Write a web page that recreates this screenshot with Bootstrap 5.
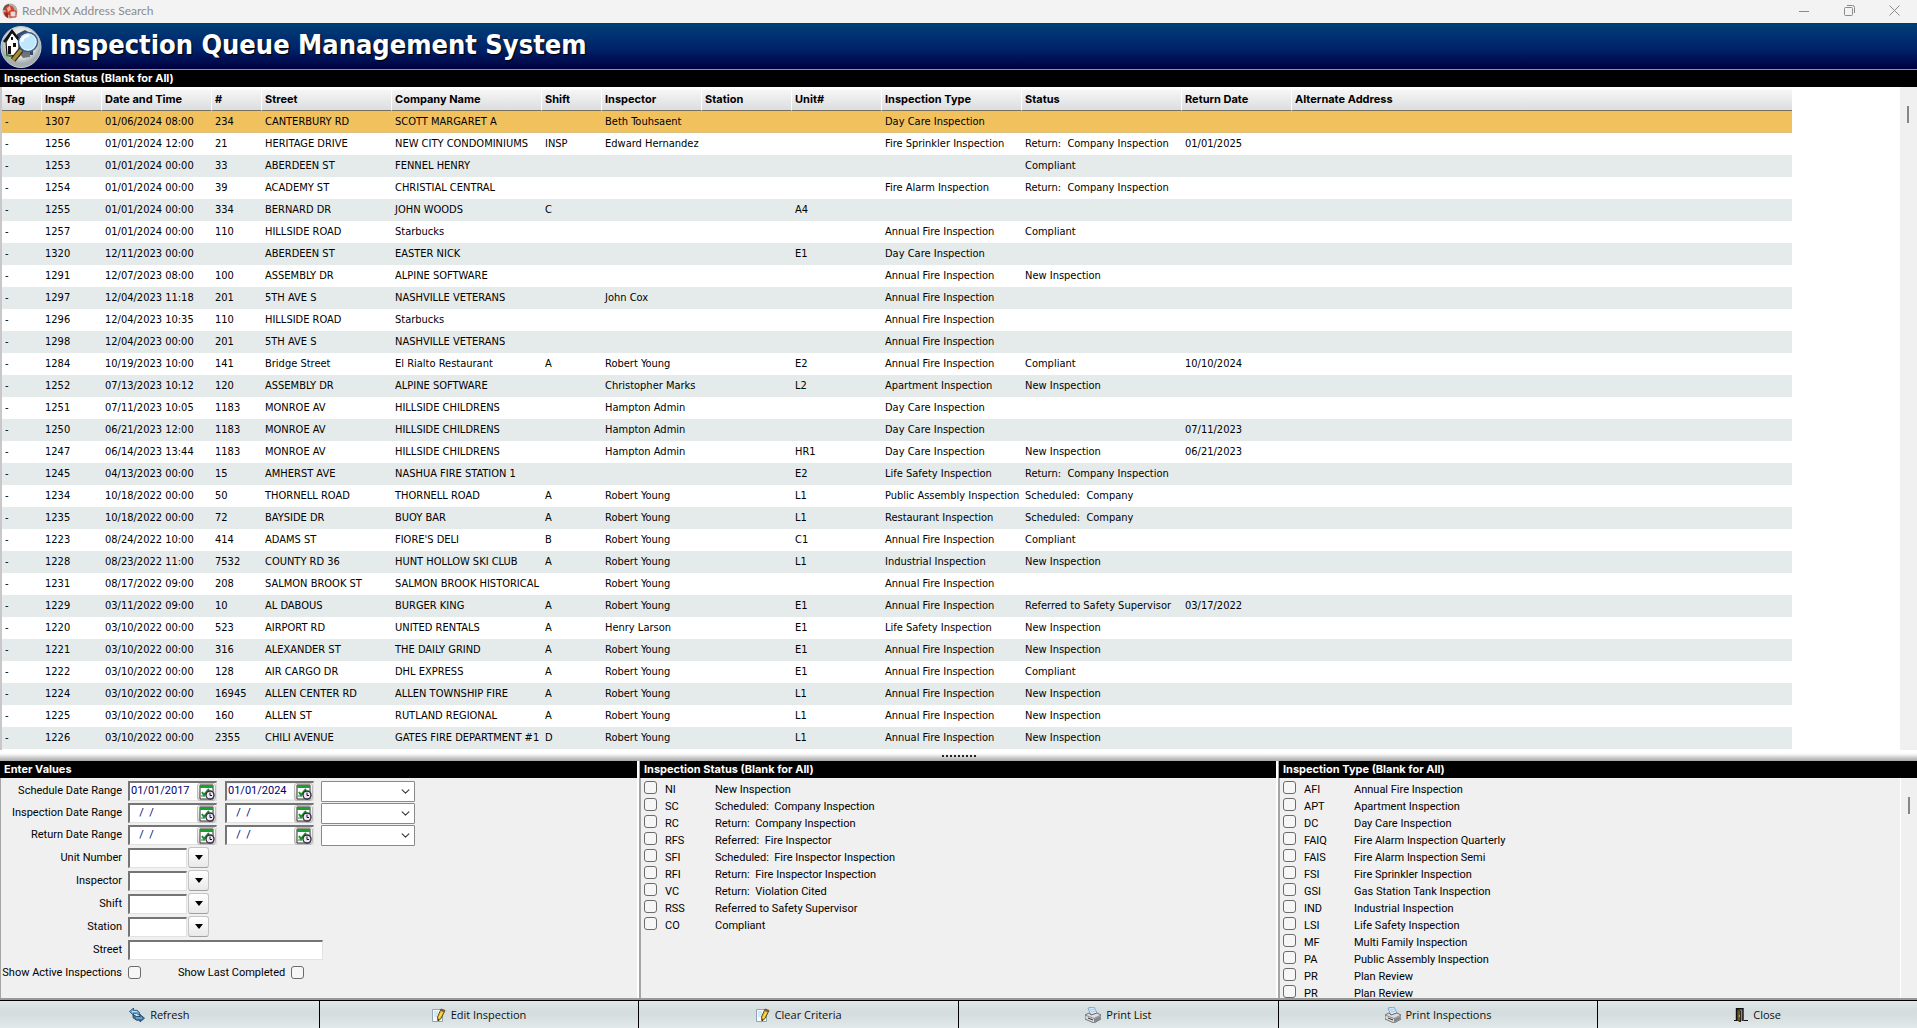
<!DOCTYPE html>
<html lang="en">
<head>
<meta charset="utf-8">
<meta name="viewport" content="width=device-width, initial-scale=1">
<title>RedNMX Address Search</title>
<link href="https://cdn.jsdelivr.net/npm/bootstrap@5.3.0/dist/css/bootstrap.min.css" rel="stylesheet">
<style>
:root{--face:#f0f0f0;--stripe:#e5ebeb;--pick:#f1c15d}
body{background:var(--face);color:#000;font:11px/14px "DejaVu Sans Condensed",sans-serif;overflow:hidden}
.titlebar{height:23px;background:#f3f3f3;color:#8b8b8b;font:12px/18px Lato,sans-serif;padding:0 10px 2px 2px}
.titlebar button{border:0;background:none;padding:0;width:45px;line-height:0;color:#8b8b8b}
.winbtns{margin-right:-10px}
.banner{height:47px;background:linear-gradient(#003f78,#00236a 55%,#000040);border-top:1px solid #10365a;border-bottom:1px solid #8a93ad}
.banner h1{font:bold 27px/32px "DejaVu Sans Condensed",sans-serif;color:#fff;margin:0 0 3px;text-shadow:1px 1px 1px #000}
.caption{height:17px;background:#000;color:#fff;font:bold 11px/17px Inter,sans-serif;padding-left:4px;margin:0}
.queue{background:#fff;border-left:2px solid #c8c8c8;min-height:0}
.queue-table{table-layout:fixed;width:1790px;border-collapse:separate;border-spacing:0}
.queue-table th{height:24px;padding:0 3px;font:bold 11px/14px Inter,sans-serif;background:linear-gradient(#fff 2px,#f6f6f6 3px,#dcdddf);border-bottom:1px solid #77705f;border-right:1px solid #fff}
.queue-table th:last-child{border-right:0}
.queue-table td{height:22px;padding:0 3px;white-space:pre;line-height:14px}
.queue-table tbody tr:nth-child(odd){background:var(--stripe)}
.queue-table tbody tr.picked{background:var(--pick)}
.picked td{border-bottom:1px solid #dcc287}
.track{width:17px;background:var(--face);padding-top:19px}
.track i{display:block;width:2px;height:17px;background:#868686;margin-left:7px}
.splitter{height:11px;background:linear-gradient(#fff 3px,#f0f0f0 5px,#c8c8c8 8px,#a8a8a8)}
.grip{width:34px;height:2px;margin-top:5px;background:repeating-linear-gradient(90deg,#222 0 2px,transparent 2px 4px)}
.panels{height:239px;grid-template-columns:repeat(3,1fr)}
.pane{border-left:2px solid #a5a5a5;border-right:2px solid #fff;min-width:0}
.pane:first-child{border-left-width:1px}
.pane:last-child{border-right:0}
.pane .caption{margin-left:-1px}
.body-font{font-family:Roboto,sans-serif}
.criteria{padding-top:2px;height:220px}
.line{display:flex;align-items:center;height:23px}
.line.dates{height:22px}
.line>label:first-child{width:121px;text-align:right;margin-right:6px;white-space:nowrap}
.line .second-label{margin:0 6px 0 37px}
.sunk{border:1px solid #e2e2e2;border-top:2px solid #757575;border-left:2px solid #757575;border-radius:0;background:#fff;height:20px;padding:0 0 0 1px;color:#000070;font-size:12px;line-height:16px}
.sunk:focus{outline:0}
.datebox{width:89px;margin-right:8px}
.datebox input{border:0;outline:0;background:none;color:#000070;width:66px;padding:0 0 1px;font-size:11px}
.datebox.lit{background:linear-gradient(90deg,#fff 66px,transparent 0),#fffbe0;box-shadow:inset 0 0 0 1px #fbf3c0}
.datebox button{width:20px;height:18px;border:1px solid #bbb;border-radius:3px;background:linear-gradient(#fff,#cfcfcf);padding:0;line-height:0}
.span-pick{width:94px;height:21px;border:1px solid #8a8a8a;border-radius:1px;padding:0 16px 0 4px;font-size:11px;background-position:right 4px center;background-size:9px 9px;margin-left:-1px}
.code{width:59px}
.drop{width:21px;height:21px;margin-left:1px;border:1px solid #c4c4c4;border-bottom-color:#a0a0a0;border-radius:3px;background:linear-gradient(#fff,#e9e9e9);padding:0;line-height:0}
.street{width:195px}
.tick{appearance:none;width:13px;height:13px;border:1px solid #6b6b6b;border-radius:3px;background:#f6f6f6;margin:0;flex:none}
.tick:checked{background:#005fb8}
.choices{height:220px;overflow:hidden;padding-top:2px;margin:0;list-style:none}
.choices label{display:flex;height:17px;line-height:19px;padding-left:3px;white-space:pre}
.choices .tick{margin-top:1px;margin-right:8px}
.choices .abbr-col{width:50px}
.actions{border-top:1px solid #000;height:28px;background:#000;grid-template-columns:repeat(6,1fr);gap:1px;box-shadow:0 -2px 0 #999}
.actions button{border:0;background:linear-gradient(#e2e8e9,#d3dcde 40%,#d9e1e3 70%,#e4eaeb);font:11px/14px "Open Sans",sans-serif;color:#111;padding:0;gap:5px}
</style>
<script src="https://cdn.jsdelivr.net/npm/bootstrap@5.3.0/dist/js/bootstrap.bundle.min.js"></script>
</head>
<body class="vh-100 d-flex flex-column">

<svg width="0" height="0" class="position-absolute" aria-hidden="true">
  <symbol id="cal" viewBox="0 0 16 16"><path d="M1 1h13v14H1z" fill="#fff" stroke="#333"/><path d="M1 1h13v3H1z" fill="#19a22b"/><path d="M3 8l2 3 5-6" fill="none" stroke="#19902a" stroke-width="2"/><path d="M2 12h4" stroke="#19902a"/><circle cx="11" cy="11" r="4" fill="#ece8f4" stroke="#2c2438" stroke-width="1.3"/><path d="M11 8.500v3h2" fill="none" stroke="#111"/></symbol>
  <symbol id="tri" viewBox="0 0 8 5"><path d="M0 0h8L4 5z" fill="#000"/></symbol>
  <symbol id="refresh" viewBox="0 0 16 14"><path d="M4.500 0L.5 3.500l4 4V5.300h3l3 2V4.500L8 2.300H4.500z" fill="#6fabd8" stroke="#1d4468" stroke-width=".8"/><path d="M11 14l4.500-3.800L11 6.500v2H7.500L4 6.500v3.200l3.500 2.500H11z" fill="#3f78aa" stroke="#17395a" stroke-width=".8"/><path d="M3 3.600h5" stroke="#c4e2f5"/><path d="M7 10h6" stroke="#8fc0e4"/></symbol>
  <symbol id="edit" viewBox="0 0 14 14"><path d="M.5 1.500h10v12H.5z" fill="#f5fbff" stroke="#8fa5b5"/><path d="M2 4h4M2 6h4M2 8h3" stroke="#b4d2e6"/><path d="M9 1l4 1.500-4 8-3 2.500-.5-4z" fill="#e8bd28" stroke="#4d3f10" stroke-width=".9"/><path d="M9 1l4 1.500-.8 1.800L8.200 2.800z" fill="#7d5b4b"/><path d="M10 4.500L7 10" stroke="#fff3a5" stroke-width=".8"/><path d="M6 13l-.3-2 1.700.8z" fill="#222"/></symbol>
  <symbol id="printer" viewBox="0 0 16 16"><path d="M3 1l6-1 3 6-6 2z" fill="#d7ebfb" stroke="#6d94b6" stroke-width=".8"/><path d="M5 3l4-.7M6 5l4-.8" stroke="#8db7d9" stroke-width=".7"/><path d="M0 8l4-2 2 2 6-2 4 2v4l-7 4-9-4z" fill="#dcdcde" stroke="#55585f" stroke-width=".8"/><path d="M0 8l9 3.500 7-3.500" fill="none" stroke="#777" stroke-width=".8"/><path d="M9 12v3.500l6.500-3.500V9z" fill="#83868d"/><path d="M3 11l5 2" stroke="#333"/></symbol>
  <symbol id="door" viewBox="0 0 14 14"><path d="M0 12.500h3M10 12.500h4" stroke="#111"/><path d="M2.500 13V.8h6.500V13" fill="#8f8a78" stroke="#111" stroke-width="1.400"/><path d="M3 1l3.500 2v11L3 12z" fill="#6b5a22" stroke="#111" stroke-width=".8"/><circle cx="5.400" cy="8" r=".7" fill="#e6cc55"/></symbol>
</svg>

<header>
  <div class="titlebar d-flex align-items-center">
    <svg width="16" height="16" viewBox="0 0 16 16" aria-hidden="true"><circle cx="8" cy="8" r="7.500" fill="#b9aaa5"/><path d="M1 7a7 7 0 0 1 6-6v6z" fill="#5e564f"/><path d="M3 5c3-4 8-3 9 1l1 6H4z" fill="#cf4630"/><path d="M5 5l3-2 1 4-3 2z" fill="#f4b29a"/><path d="M8 8h6v6H8z" fill="#e7dcd9" stroke="#c0301e"/><path d="M2 9l4 1v5a7 7 0 0 1-4-6z" fill="#a32418"/></svg>
    <span class="ms-1">RedNMX Address Search</span>
    <div class="winbtns d-flex ms-auto">
      <button aria-label="Minimize"><svg width="11" height="11" viewBox="0 0 11 11"><path d="M0 6.500h10" stroke="currentColor"/></svg></button>
      <button aria-label="Restore"><svg width="11" height="11" viewBox="0 0 11 11" fill="none" stroke="currentColor"><rect x=".5" y="2.500" width="8" height="8" rx="1"/><path d="M3 .5h5.500a2 2 0 0 1 2 2V8"/></svg></button>
      <button aria-label="Close"><svg width="11" height="11" viewBox="0 0 11 11"><path d="M.5.5l10 10M10.500.5l-10 10" stroke="currentColor"/></svg></button>
    </div>
  </div>
  <div class="banner d-flex align-items-center">
    <svg width="42" height="44" viewBox="0 0 42 44" aria-hidden="true" class="me-2">
      <defs><radialGradient id="disc" cx=".5" cy=".4"><stop offset="0" stop-color="#fff"/><stop offset=".7" stop-color="#dfe3e2"/><stop offset="1" stop-color="#a5adaf"/></radialGradient></defs>
      <ellipse cx="21" cy="22" rx="20" ry="20.500" fill="url(#disc)" stroke="#c9cfd0"/>
      <path d="M17 9l8-4 8 5v20H17z" fill="#3a4672"/><path d="M17 26h13v6l-7 1z" fill="#6f7474"/>
      <path d="M6 17l6-10 7 9v15l-12-1z" fill="#fff" stroke="#111" stroke-width="1.200"/>
      <path d="M4 17l8-11 8 10" fill="none" stroke="#111" stroke-width="2.500"/>
      <path d="M8 21h3v8H8zM13 18h3v4h-3zM11 12h2v3h-2z" fill="#111"/><path d="M6 30l8 2 3-3" stroke="#3b8a2c" stroke-width="2" fill="none"/>
      <path d="M21 25l-8 10" stroke="#3a2a10" stroke-width="6"/><path d="M21 25l-8 10" stroke="#a98b3c" stroke-width="3.500"/>
      <circle cx="28" cy="17" r="9.500" fill="#bfe6fb" stroke="#3a5e86" stroke-width="1.500"/><circle cx="28" cy="17" r="8" fill="none" stroke="#e7f6ff"/>
      <path d="M22 17a6 6 0 0 1 7-6" stroke="#fff" stroke-width="2.500" fill="none"/>
    </svg>
    <h1>Inspection Queue Management System</h1>
  </div>
</header>

<main class="flex-grow-1 d-flex flex-column" style="min-height:0">
  <h2 class="caption">Inspection Status (Blank for All)</h2>
  <section class="queue flex-grow-1 d-flex overflow-hidden">
    <div class="flex-grow-1 overflow-hidden">
      <table class="queue-table">
        <colgroup id="cols"></colgroup>
        <thead><tr><th>Tag</th><th>Insp#</th><th>Date and Time</th><th>#</th><th>Street</th><th>Company Name</th><th>Shift</th><th>Inspector</th><th>Station</th><th>Unit#</th><th>Inspection Type</th><th>Status</th><th>Return Date</th><th>Alternate Address</th></tr></thead>
        <tbody id="rows"></tbody>
      </table>
    </div>
    <div class="track"><i></i></div>
  </section>
  <div class="splitter d-flex justify-content-center"><div class="grip"></div></div>

  <div class="panels d-grid body-font">
    <section class="pane">
      <h2 class="caption">Enter Values</h2>
      <form class="criteria" id="criteria" onsubmit="return false"></form>
    </section>
    <section class="pane">
      <h2 class="caption">Inspection Status (Blank for All)</h2>
      <ul class="choices ps-0" id="statuses"></ul>
    </section>
    <section class="pane">
      <h2 class="caption">Inspection Type (Blank for All)</h2>
      <div class="d-flex">
        <ul class="choices ps-0 flex-grow-1" id="types"></ul>
        <div class="track border-start border-white"><i></i></div>
      </div>
    </section>
  </div>
</main>

<footer class="actions d-grid">
  <button class="d-flex align-items-center justify-content-center"><svg width="16" height="14"><use href="#refresh"/></svg>Refresh</button>
  <button class="d-flex align-items-center justify-content-center"><svg width="14" height="14"><use href="#edit"/></svg>Edit Inspection</button>
  <button class="d-flex align-items-center justify-content-center"><svg width="14" height="14"><use href="#edit"/></svg>Clear Criteria</button>
  <button class="d-flex align-items-center justify-content-center"><svg width="16" height="16"><use href="#printer"/></svg>Print List</button>
  <button class="d-flex align-items-center justify-content-center"><svg width="16" height="16"><use href="#printer"/></svg>Print Inspections</button>
  <button class="d-flex align-items-center justify-content-center"><svg width="14" height="14"><use href="#door"/></svg>Close</button>
</footer>

<script>
const widths = [40,60,110,50,130,150,60,100,90,90,140,160,110,500];
document.getElementById('cols').innerHTML = widths.map(w => `<col style="width:${w}px">`).join('');

// insp | date | number | street | company | shift | inspector | station | unit | type | status | return date
const queue = `1307|01/06/2024 08:00|234|CANTERBURY RD|SCOTT MARGARET A||Beth Touhsaent|||Day Care Inspection
1256|01/01/2024 12:00|21|HERITAGE DRIVE|NEW CITY CONDOMINIUMS|INSP|Edward Hernandez|||Fire Sprinkler Inspection|Return:  Company Inspection|01/01/2025
1253|01/01/2024 00:00|33|ABERDEEN ST|FENNEL HENRY||||||Compliant
1254|01/01/2024 00:00|39|ACADEMY ST|CHRISTIAL CENTRAL|||||Fire Alarm Inspection|Return:  Company Inspection
1255|01/01/2024 00:00|334|BERNARD DR|JOHN WOODS|C|||A4
1257|01/01/2024 00:00|110|HILLSIDE ROAD|Starbucks|||||Annual Fire Inspection|Compliant
1320|12/11/2023 00:00||ABERDEEN ST|EASTER NICK||||E1|Day Care Inspection
1291|12/07/2023 08:00|100|ASSEMBLY DR|ALPINE SOFTWARE|||||Annual Fire Inspection|New Inspection
1297|12/04/2023 11:18|201|5TH AVE S|NASHVILLE VETERANS||John Cox|||Annual Fire Inspection
1296|12/04/2023 10:35|110|HILLSIDE ROAD|Starbucks|||||Annual Fire Inspection
1298|12/04/2023 00:00|201|5TH AVE S|NASHVILLE VETERANS|||||Annual Fire Inspection
1284|10/19/2023 10:00|141|Bridge Street|El Rialto Restaurant|A|Robert Young||E2|Annual Fire Inspection|Compliant|10/10/2024
1252|07/13/2023 10:12|120|ASSEMBLY DR|ALPINE SOFTWARE||Christopher Marks||L2|Apartment Inspection|New Inspection
1251|07/11/2023 10:05|1183|MONROE AV|HILLSIDE CHILDRENS||Hampton Admin|||Day Care Inspection
1250|06/21/2023 12:00|1183|MONROE AV|HILLSIDE CHILDRENS||Hampton Admin|||Day Care Inspection||07/11/2023
1247|06/14/2023 13:44|1183|MONROE AV|HILLSIDE CHILDRENS||Hampton Admin||HR1|Day Care Inspection|New Inspection|06/21/2023
1245|04/13/2023 00:00|15|AMHERST AVE|NASHUA FIRE STATION 1||||E2|Life Safety Inspection|Return:  Company Inspection
1234|10/18/2022 00:00|50|THORNELL ROAD|THORNELL ROAD|A|Robert Young||L1|Public Assembly Inspection|Scheduled:  Company
1235|10/18/2022 00:00|72|BAYSIDE DR|BUOY BAR|A|Robert Young||L1|Restaurant Inspection|Scheduled:  Company
1223|08/24/2022 10:00|414|ADAMS ST|FIORE'S DELI|B|Robert Young||C1|Annual Fire Inspection|Compliant
1228|08/23/2022 11:00|7532|COUNTY RD 36|HUNT HOLLOW SKI CLUB|A|Robert Young||L1|Industrial Inspection|New Inspection
1231|08/17/2022 09:00|208|SALMON BROOK ST|SALMON BROOK HISTORICAL||Robert Young|||Annual Fire Inspection
1229|03/11/2022 09:00|10|AL DABOUS|BURGER KING|A|Robert Young||E1|Annual Fire Inspection|Referred to Safety Supervisor|03/17/2022
1220|03/10/2022 00:00|523|AIRPORT RD|UNITED RENTALS|A|Henry Larson||E1|Life Safety Inspection|New Inspection
1221|03/10/2022 00:00|316|ALEXANDER ST|THE DAILY GRIND|A|Robert Young||E1|Annual Fire Inspection|New Inspection
1222|03/10/2022 00:00|128|AIR CARGO DR|DHL EXPRESS|A|Robert Young||E1|Annual Fire Inspection|Compliant
1224|03/10/2022 00:00|16945|ALLEN CENTER RD|ALLEN TOWNSHIP FIRE|A|Robert Young||L1|Annual Fire Inspection|New Inspection
1225|03/10/2022 00:00|160|ALLEN ST|RUTLAND REGIONAL|A|Robert Young||L1|Annual Fire Inspection|New Inspection
1226|03/10/2022 00:00|2355|CHILI AVENUE|GATES FIRE DEPARTMENT #1|D|Robert Young||L1|Annual Fire Inspection|New Inspection`;
document.getElementById('rows').innerHTML = queue.split('\n').map((line, i) => {
  const cells = ['-', ...line.split('|')];
  while (cells.length < widths.length) cells.push('');
  return `<tr${i ? '' : ' class="picked"'}>${cells.map(c => `<td>${c}</td>`).join('')}</tr>`;
}).join('');

const dateBox = (id, label, value, lit) => `<div class="sunk datebox d-flex${lit ? ' lit' : ''}"><input type="text" id="${id}" aria-label="${label}" value="${value}"><button type="button" aria-label="Pick date"><svg width="16" height="16"><use href="#cal"/></svg></button></div>`;
const dates = [['Schedule Date Range','01/01/2017','01/01/2024'],['Inspection Date Range','   /  /','   /  /'],['Return Date Range','   /  /','   /  /']]
  .map(([t, a, b], i) => `<div class="line dates"><label for="d${i}">${t}</label>${dateBox('d' + i, t + ' from', a)}${dateBox('e' + i, t + ' to', b, !i)}<select class="form-select span-pick" aria-label="${t} preset"><option></option></select></div>`);
const codes = ['Unit Number','Inspector','Shift','Station']
  .map((t, i) => `<div class="line"><label for="c${i}">${t}</label><input type="text" class="sunk code" id="c${i}"><button type="button" class="drop" aria-label="Choose ${t}"><svg width="8" height="5"><use href="#tri"/></svg></button></div>`);
document.getElementById('criteria').innerHTML = dates.join('') + codes.join('') +
  `<div class="line"><label for="st">Street</label><input type="text" class="sunk street" id="st"></div>
   <div class="line"><label for="act">Show Active Inspections</label><input type="checkbox" class="tick" id="act"><label for="last" class="second-label">Show Last Completed</label><input type="checkbox" class="tick" id="last"></div>`;

const choice = ([code, text]) => `<li><label><input type="checkbox" class="tick"><span class="abbr-col">${code}</span><span>${text}</span></label></li>`;
document.getElementById('statuses').innerHTML = [['NI','New Inspection'],['SC','Scheduled:  Company Inspection'],['RC','Return:  Company Inspection'],['RFS','Referred:  Fire Inspector'],['SFI','Scheduled:  Fire Inspector Inspection'],['RFI','Return:  Fire Inspector Inspection'],['VC','Return:  Violation Cited'],['RSS','Referred to Safety Supervisor'],['CO','Compliant']].map(choice).join('');
document.getElementById('types').innerHTML = [['AFI','Annual Fire Inspection'],['APT','Apartment Inspection'],['DC','Day Care Inspection'],['FAIQ','Fire Alarm Inspection Quarterly'],['FAIS','Fire Alarm Inspection Semi'],['FSI','Fire Sprinkler Inspection'],['GSI','Gas Station Tank Inspection'],['IND','Industrial Inspection'],['LSI','Life Safety Inspection'],['MF','Multi Family Inspection'],['PA','Public Assembly Inspection'],['PR','Plan Review'],['PR','Plan Review']].map(choice).join('');
</script>
</body>
</html>
